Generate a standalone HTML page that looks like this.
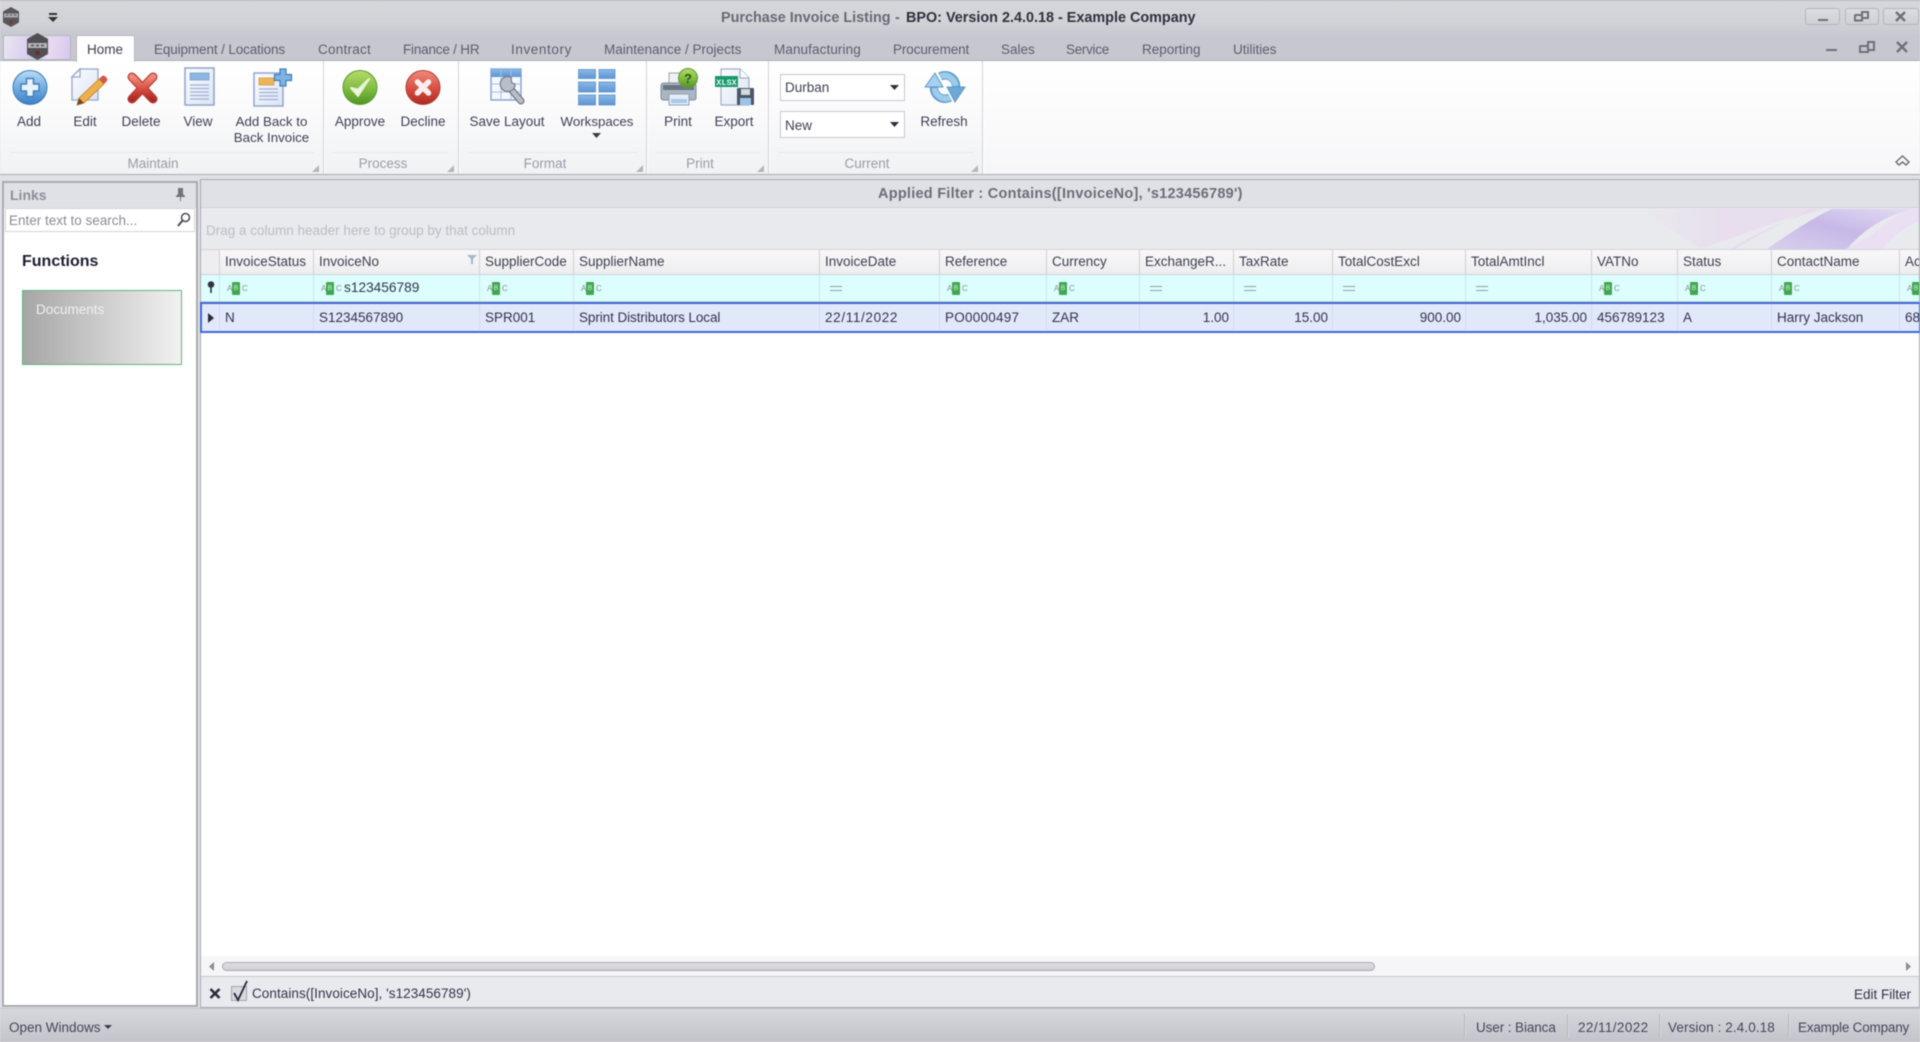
<!DOCTYPE html>
<html><head><meta charset="utf-8"><title>Purchase Invoice Listing</title>
<style>
html,body{margin:0;padding:0;background:#e0e1e6;}
#r{position:relative;width:1920px;height:1042px;overflow:hidden;background:#e0e1e6;font-family:"Liberation Sans",sans-serif;font-size:13.5px;color:#3e3f50;filter:blur(.45px);}
.a{position:absolute;}
.t{position:absolute;white-space:nowrap;line-height:16px;}
.c{transform:translateX(-50%);}
.tab{position:absolute;top:42px;line-height:16px;white-space:nowrap;color:#5d5e6e;}
.sep{position:absolute;top:61px;height:113px;width:1px;background:#d2d3d9;box-shadow:1px 0 0 #fff;}
.gl{position:absolute;top:156px;white-space:nowrap;line-height:16px;color:#9a9ba8;transform:translateX(-50%);}
.gline{position:absolute;top:152px;height:1px;background:#e6e7ea;}
.tri{position:absolute;top:165px;width:0;height:0;border-left:7px solid transparent;border-bottom:7px solid #b4b5bc;}
.h{position:absolute;top:250px;height:24px;background:linear-gradient(#f8f8f9,#eeeef0);border-right:1px solid #d0d1d6;line-height:23px;padding-left:5px;box-sizing:border-box;white-space:nowrap;overflow:hidden;color:#3e3f50;}
.f{position:absolute;top:275px;height:26px;border-right:1px solid #d4e4e6;box-sizing:border-box;}
.d{position:absolute;top:304px;height:26px;border-right:1px solid #d3daee;line-height:27px;padding:0 4px 0 5px;box-sizing:border-box;white-space:nowrap;overflow:hidden;color:#33344a;}
.n{text-align:right;}
.abc{position:absolute;left:7px;top:7px;width:24px;height:13px;}
.abc i{position:absolute;font-style:normal;font-size:8px;line-height:13px;color:#8b8b8b;}
.abc b{position:absolute;left:5px;top:0;width:8px;height:13px;background:#3fa84e;border-radius:1px;color:#cfeeda;font-size:7px;line-height:13px;text-align:center;font-weight:normal;}
.eq{position:absolute;left:10px;top:11px;width:12px;height:3px;border-top:1px solid #9a9a9a;border-bottom:1px solid #9a9a9a;}
svg{position:absolute;overflow:visible;}
.ss{position:absolute;top:1014px;height:24px;width:1px;background:#b5b6bd;box-shadow:1px 0 0 #d8d9dd;}
</style></head><body><div id="r">

<!-- title bar / tab row -->
<div class="a" style="left:0;top:0;width:1920px;height:61px;background:linear-gradient(#d6d7db 0,#d2d3d8 20px,#c6c7d0 36px,#c6c7cf 61px);border-top:1px solid #b4b5bb;box-sizing:border-box;"></div>

<svg style="left:2px;top:7px" width="18" height="20" viewBox="0 0 18 20"><path d="M9 0l8 4.500v11L9 20l-8-4.500v-11z" fill="#58585c"/><rect x="2" y="6.500" width="14" height="4" fill="#a9a9ae"/><path d="M4 8h2M8 8h2M12 8h2" stroke="#55555a" stroke-width="1"/><circle cx="9" cy="15" r="2" fill="#7a3a3a"/></svg>
<svg style="left:48px;top:13px" width="11" height="10" viewBox="0 0 11 10"><rect x="1" y="0" width="8" height="2" fill="#333"/><path d="M0 4h10L5 9z" fill="#333"/></svg>

<div class="t" style="left:721px;top:10px;font-weight:bold;font-size:14.4px;color:#686977">Purchase Invoice Listing</div>
<div class="t" style="left:895px;top:10px;font-weight:bold;font-size:14.4px;color:#686977">-</div>
<div class="t" style="left:906px;top:10px;font-weight:bold;font-size:14.4px;color:#2f3040">BPO: Version 2.4.0.18 - Example Company</div>

<div class="a" style="left:1805px;top:8px;width:35px;height:17px;border:1px solid #b4b5bc;border-radius:3px;box-sizing:border-box;background:linear-gradient(#dcdde1,#cfd0d5)"></div>
<div class="a" style="left:1845px;top:8px;width:34px;height:17px;border:1px solid #b4b5bc;border-radius:3px;box-sizing:border-box;background:linear-gradient(#dcdde1,#cfd0d5)"></div>
<div class="a" style="left:1883px;top:8px;width:36px;height:17px;border:1px solid #b4b5bc;border-radius:3px;box-sizing:border-box;background:linear-gradient(#dcdde1,#cfd0d5)"></div>
<svg style="left:0;top:0" width="1920" height="61" viewBox="0 0 1920 61" fill="none" stroke="#6f707c" stroke-width="2">
<path d="M1818 20h10"/>
<path d="M1855 15h7v-3h6v6h-6M1855 14.500v6h7v-6"/>
<path d="M1896 12l9 9M1905 12l-9 9" stroke-width="2.400"/>
<path d="M1826 50h11"/>
<path d="M1860 46h8v-4h6v8h-6M1860 45.500v6.500h8v-6.500"/>
<path d="M1897 42l10 10M1907 42l-10 10" stroke-width="2.400"/>
</svg>

<!-- app button -->
<div class="a" style="left:3px;top:35px;width:68px;height:25px;background:linear-gradient(100deg,#e9e6f3,#d8c9ef 45%,#e8d9f2 70%,#d5c8ee);border:1px solid #b7b7bf;box-sizing:border-box;border-radius:2px"></div>
<svg style="left:26px;top:33px" width="23" height="27" viewBox="0 0 23 27"><path d="M11.500 0L22 6v15l-10.500 6L1 21V6z" fill="#505054"/><rect x="2" y="10" width="19" height="5" fill="#b5b5ba"/><path d="M5 12.500h3M10 12.500h3M15 12.500h3" stroke="#505054" stroke-width="1.400"/><circle cx="11.500" cy="20" r="2.500" fill="#6a2f2f"/></svg>

<!-- Home tab + tabs -->
<div class="a" style="left:76px;top:35px;width:59px;height:27px;background:#fff;border:1px solid #b7b8be;border-bottom:none;box-sizing:border-box;border-radius:2px 2px 0 0;z-index:3"></div>
<div class="tab" style="left:87px;color:#3d3e4e;z-index:4">Home</div>
<div class="tab" style="left:154px;letter-spacing:-.12px">Equipment / Locations</div>
<div class="tab" style="left:318px;letter-spacing:.25px">Contract</div>
<div class="tab" style="left:403px;letter-spacing:-.2px">Finance / HR</div>
<div class="tab" style="left:511px;letter-spacing:.6px">Inventory</div>
<div class="tab" style="left:604px">Maintenance / Projects</div>
<div class="tab" style="left:774px;letter-spacing:.1px">Manufacturing</div>
<div class="tab" style="left:893px;letter-spacing:-.1px">Procurement</div>
<div class="tab" style="left:1001px">Sales</div>
<div class="tab" style="left:1066px;letter-spacing:-.3px">Service</div>
<div class="tab" style="left:1142px">Reporting</div>
<div class="tab" style="left:1233px">Utilities</div>

<!-- ribbon body -->
<div class="a" style="left:0;top:60px;width:1920px;height:115px;background:linear-gradient(#fff 0,#fbfbfc 40%,#f1f2f4 100%);border-top:1px solid #aeafb6;border-bottom:1px solid #a9aab1;box-sizing:border-box;z-index:1"></div>
<div class="a" style="left:982px;top:61px;width:938px;height:113px;background:linear-gradient(#fff,#f7f7f9);z-index:1"></div>
<div id="rb" class="a" style="left:0;top:0;width:1920px;height:180px;z-index:2;pointer-events:none">
<div class="sep" style="left:323px"></div><div class="sep" style="left:458px"></div><div class="sep" style="left:646px"></div><div class="sep" style="left:768px"></div><div class="sep" style="left:982px"></div>
<div class="gline" style="left:10px;width:304px"></div><div class="gline" style="left:333px;width:115px"></div><div class="gline" style="left:468px;width:170px"></div><div class="gline" style="left:656px;width:104px"></div><div class="gline" style="left:778px;width:196px"></div>
<div class="gl" style="left:153px">Maintain</div><div class="gl" style="left:383px">Process</div><div class="gl" style="left:545px">Format</div><div class="gl" style="left:700px">Print</div><div class="gl" style="left:867px">Current</div>
<div class="tri" style="left:312px"></div><div class="tri" style="left:447px"></div><div class="tri" style="left:636px"></div><div class="tri" style="left:757px"></div><div class="tri" style="left:971px"></div>

<!-- Add -->
<svg style="left:12px;top:69px" width="36" height="37" viewBox="0 0 36 37"><defs>
<linearGradient id="gb" x1="0" y1="0" x2="0" y2="1"><stop offset="0" stop-color="#b9dcf7"/><stop offset=".55" stop-color="#6fa9de"/><stop offset="1" stop-color="#3b7fc4"/></linearGradient>
<linearGradient id="gg" x1="0" y1="0" x2="0" y2="1"><stop offset="0" stop-color="#b5dc6a"/><stop offset=".6" stop-color="#7ab83d"/><stop offset="1" stop-color="#4f9426"/></linearGradient>
<linearGradient id="gr" x1="0" y1="0" x2="0" y2="1"><stop offset="0" stop-color="#f08a7d"/><stop offset=".6" stop-color="#d4483c"/><stop offset="1" stop-color="#ab2b22"/></linearGradient>
<linearGradient id="gd" x1="0" y1="0" x2="1" y2="1"><stop offset="0" stop-color="#fbfcff"/><stop offset="1" stop-color="#dbe4f5"/></linearGradient>
<linearGradient id="gt" x1="0" y1="0" x2="0" y2="1"><stop offset="0" stop-color="#8ab9e8"/><stop offset="1" stop-color="#5b95d2"/></linearGradient>
</defs>
<circle cx="18" cy="18.500" r="17" fill="url(#gb)" stroke="#3c79b6"/><path d="M14.500 9.500h7v5.500h5.500v7h-5.500v5.500h-7V22H9v-7h5.500z" fill="#eaf3fb" stroke="#3f7fbe" stroke-width="1.500" stroke-linejoin="round"/></svg>
<div class="t c" style="left:29px;top:114px;color:#3e3f55">Add</div>

<!-- Edit -->
<svg style="left:71px;top:68px" width="36" height="38" viewBox="0 0 36 38"><path d="M9 1h18v31H1V9z" fill="url(#gd)" stroke="#97a7c8" stroke-width="1.300"/><path d="M9 1v8H1z" fill="#fff" stroke="#97a7c8" stroke-width="1.300"/><path d="M8 30l20-19 5 5-20 19-7 2z" fill="#eeb04a" stroke="#c47f23" stroke-width=".8"/><path d="M28 11l3-3q2-1 4 1t1 4l-3 3z" fill="#d4574c"/><path d="M6 37l2-7 5 5z" fill="#6e4b2b"/></svg>
<div class="t c" style="left:85px;top:114px;color:#3e3f55">Edit</div>

<!-- Delete -->
<svg style="left:127px;top:72px" width="31" height="32" viewBox="0 0 31 32"><path d="M5 5L26 27M26 5L5 27" stroke="#b73e33" stroke-width="9" stroke-linecap="round"/><path d="M5 5L26 27M26 5L5 27" stroke="url(#gr)" stroke-width="6.500" stroke-linecap="round"/></svg>
<div class="t c" style="left:141px;top:114px;color:#3e3f55">Delete</div>

<!-- View -->
<svg style="left:184px;top:67px" width="31" height="39" viewBox="0 0 31 39"><rect x="1" y="1" width="29" height="37" fill="url(#gd)" stroke="#90a3cc" stroke-width="1.500"/><rect x="6" y="6" width="19" height="7" fill="#8db6e0" stroke="#6f9bcc" stroke-width=".7"/><path d="M6 18h19M6 21.500h19M6 25h19M6 28.500h19M6 32h19" stroke="#9fb1d2" stroke-width="1.200"/></svg>
<div class="t c" style="left:198px;top:114px;color:#3e3f55">View</div>

<!-- Add back -->
<svg style="left:253px;top:68px" width="40" height="39" viewBox="0 0 40 39"><rect x="1" y="5" width="29" height="33" fill="url(#gd)" stroke="#94a6ca" stroke-width="1.500"/><rect x="6" y="10" width="15" height="7" fill="#eeb558" stroke="#cf9234" stroke-width=".7"/><path d="M6 21h19M6 24.500h19M6 28h19M6 31.500h19" stroke="#9fb1d2" stroke-width="1.200"/><path d="M27 1h6v5.500h5.500v6H33V18h-6v-5.500h-5.500v-6H27z" fill="#7fb2e2" stroke="#3e7fbd" stroke-width="1.200"/></svg>
<div class="t c" style="left:271.500px;top:114px;color:#3e3f55;font-size:13.3px">Add Back to</div>
<div class="t c" style="left:271.500px;top:130px;color:#3e3f55;font-size:13.3px">Back Invoice</div>

<!-- Approve -->
<svg style="left:342px;top:69px" width="36" height="37" viewBox="0 0 36 37"><circle cx="18" cy="18.500" r="17" fill="url(#gg)" stroke="#5a9b30"/><path d="M9 19l7 8L27 10l-11 10.500z" fill="#f1f7e4" stroke="#e9f3d8" stroke-width="2" stroke-linejoin="round"/></svg>
<div class="t c" style="left:360px;top:114px;color:#3e3f55">Approve</div>

<!-- Decline -->
<svg style="left:405px;top:69px" width="36" height="37" viewBox="0 0 36 37"><circle cx="18" cy="18.500" r="17" fill="url(#gr)" stroke="#b23a30"/><path d="M12.500 13L23.500 24M23.500 13L12.500 24" stroke="#fbeeed" stroke-width="5.500" stroke-linecap="round"/></svg>
<div class="t c" style="left:423px;top:114px;color:#3e3f55">Decline</div>

<!-- Save layout -->
<svg style="left:490px;top:68px" width="36" height="38" viewBox="0 0 36 38"><rect x="1" y="1" width="30" height="31" fill="#f4f7fc" stroke="#7a9ccb" stroke-width="1.300"/><rect x="1" y="1" width="30" height="8" fill="url(#gt)"/><path d="M11 1v31M21 1v31M1 16h30M1 24h30" stroke="#a8bedd" stroke-width="1"/><path d="M19 19L31 33" stroke="#6e7783" stroke-width="7" stroke-linecap="round"/><path d="M19 19L31 33" stroke="#b8bfc9" stroke-width="4.500" stroke-linecap="round"/><path d="M21.500 9.500a7.500 7.500 0 1 0 3.500 8.500L25 16l-3-1-.8-2.800z" fill="#b8bfc9" stroke="#6e7783" stroke-width="1.100" stroke-linejoin="round"/></svg>
<div class="t c" style="left:507px;top:114px;color:#3e3f55">Save Layout</div>

<!-- Workspaces -->
<svg style="left:578px;top:69px" width="38" height="37" viewBox="0 0 38 37"><g fill="url(#gt)" stroke="#5d92c9" stroke-width=".8"><rect x=".5" y=".5" width="17" height="9"/><rect x="21" y=".5" width="16" height="9"/><rect x=".5" y="13" width="17" height="10"/><rect x="21" y="13" width="16" height="10"/><rect x=".5" y="26" width="17" height="10"/><rect x="21" y="26" width="16" height="10"/></g></svg>
<div class="t c" style="left:597px;top:114px;color:#3e3f55;font-size:13.3px">Workspaces</div>
<svg style="left:592px;top:133px" width="9" height="5" viewBox="0 0 9 5"><path d="M0 0h9L4.500 5z" fill="#3a3a44"/></svg>

<!-- Print -->
<svg style="left:659px;top:68px" width="40" height="38" viewBox="0 0 40 38"><rect x="10" y="5" width="20" height="14" fill="#eef1f6" stroke="#9ba5b3"/><path d="M5 15h29q3 0 3 3v12q0 2-3 2H5q-3 0-3-2V18q0-3 3-3z" fill="#aab6c4" stroke="#7f8b9a"/><rect x="4" y="17" width="31" height="5" fill="#6a7583"/><rect x="10" y="26" width="20" height="11" fill="#e3ecf7" stroke="#92a0b2"/><rect x="12" y="31" width="16" height="4" fill="#a9c8ea"/><circle cx="29" cy="10" r="9.500" fill="url(#gg)" stroke="#5f9b35"/><text x="29" y="15" text-anchor="middle" font-family="Liberation Sans" font-weight="bold" font-size="13" fill="#33501a">?</text></svg>
<div class="t c" style="left:678px;top:114px;color:#3e3f55">Print</div>

<!-- Export -->
<svg style="left:715px;top:68px" width="40" height="39" viewBox="0 0 40 39"><path d="M6 1h19l9 9v27H6z" fill="url(#gd)" stroke="#a1aec8" stroke-width="1.200"/><path d="M25 1v9h9" fill="#fff" stroke="#a1aec8" stroke-width="1.200"/><rect x="0" y="8" width="23" height="11" fill="#159a6b"/><text x="11.500" y="16.800" text-anchor="middle" font-family="Liberation Mono" font-weight="bold" font-size="8.500" fill="#e8f8f0">XLSX</text><rect x="22" y="20" width="17" height="17" rx="1" fill="#4c5664"/><rect x="26" y="21" width="9" height="6" fill="#d5dae2"/><rect x="25" y="30" width="11" height="7" fill="#9cc4ea"/></svg>
<div class="t c" style="left:734px;top:114px;color:#3e3f55">Export</div>

<!-- Combos -->
<div class="a" style="left:780px;top:74px;width:125px;height:27px;background:#fff;border:1px solid #c7c8ce;box-sizing:border-box"></div>
<div class="t" style="left:785px;top:80px;color:#3e3f55">Durban</div>
<svg style="left:890px;top:85px" width="9" height="5" viewBox="0 0 9 5"><path d="M0 0h9L4.500 5z" fill="#2f2f38"/></svg>
<div class="a" style="left:780px;top:111px;width:125px;height:27px;background:#fff;border:1px solid #c7c8ce;box-sizing:border-box"></div>
<div class="t" style="left:785px;top:118px;color:#3e3f55">New</div>
<svg style="left:890px;top:122px" width="9" height="5" viewBox="0 0 9 5"><path d="M0 0h9L4.500 5z" fill="#2f2f38"/></svg>

<!-- Refresh -->
<svg style="left:924px;top:71px" width="42" height="34" viewBox="0 0 42 34" fill="none"><g stroke="#5f9ac9" stroke-width="8.500"><path d="M16 5.500A11 11 0 0 1 32 16"/><path d="M26 26.500A11 11 0 0 1 10 16"/></g><path d="M1 16L11 2l8 14z" fill="#a5d0ef" stroke="#5f9ac9"/><path d="M23 16h18L31 31z" fill="#6ea8d8" stroke="#5f9ac9"/><g stroke="#9ccbec" stroke-width="6"><path d="M16 5.500A11 11 0 0 1 31.500 15"/><path d="M26 26.500A11 11 0 0 1 10.500 17"/></g></svg>
<div class="t c" style="left:944px;top:114px;color:#3e3f55">Refresh</div>

<!-- collapse -->
<svg style="left:1895px;top:155px" width="15" height="12" viewBox="0 0 15 12" fill="none" stroke="#70717c" stroke-width="1.500"><path d="M1 7L7.500 1 14 7l-3 3-3.500-3-3.500 3z"/></svg>
</div>

<!-- sidebar -->
<div class="a" style="left:2px;top:181px;width:196px;height:826px;border:1px solid #a9aab0;border-width:2px;box-sizing:border-box;background:#fff"></div>
<div class="a" style="left:4px;top:183px;width:192px;height:25px;background:#e0e1e6"></div>
<div class="t" style="left:10px;top:187px;font-weight:bold;font-size:14px;color:#8d8e9b">Links</div>
<svg style="left:176px;top:188px" width="9" height="13" viewBox="0 0 9 13"><path d="M2 0h5v6l2 2v1H5v4H4V9H0V8l2-2z" fill="#72737f"/></svg>
<div class="a" style="left:5px;top:208px;width:190px;height:24px;background:#fff;border:1px solid #d4d5da;box-sizing:border-box"></div>
<div class="t" style="left:9px;top:213px;color:#8a8b95">Enter text to search...</div>
<svg style="left:177px;top:212px" width="14" height="15" viewBox="0 0 14 15" fill="none" stroke="#4a4b55" stroke-width="1.500"><circle cx="8.500" cy="5.500" r="4"/><path d="M5.500 8.500L1 14" stroke-width="2"/></svg>
<div class="t" style="left:22px;top:254px;font-weight:bold;font-size:16px;color:#1d1e33">Functions</div>
<div class="a" style="left:22px;top:290px;width:160px;height:75px;background:linear-gradient(90deg,#a6a6a6,#f2f2f2);border:1px solid #5db57e;box-sizing:border-box"></div>
<div class="t" style="left:36px;top:302px;color:#f0f0f0">Documents</div>

<!-- main grid container -->
<div class="a" style="left:200px;top:179px;width:1720px;height:829px;background:#fff;border:1px solid #a7a8ae;border-width:1px 1px 1px 1px;box-sizing:border-box"></div>
<div class="a" style="left:201px;top:180px;width:1718px;height:28px;background:#e0e1e6;border-bottom:1px solid #d0d1d6;box-sizing:border-box"></div>
<div class="t" style="left:878px;top:186px;font-weight:bold;font-size:14.5px;letter-spacing:.25px;color:#6c6d7a">Applied Filter : Contains([InvoiceNo], 's123456789')</div>
<div class="a" style="left:201px;top:208px;width:1718px;height:42px;background:#e9eaee;border-bottom:1px solid #d2d3d8;box-sizing:border-box"></div>
<svg style="left:1640px;top:209px" width="279" height="40" viewBox="0 0 279 40"><defs>
<linearGradient id="w1" x1="0" y1="0" x2="1" y2="0"><stop offset="0" stop-color="#e9eaee"/><stop offset=".5" stop-color="#e8d6ec"/><stop offset="1" stop-color="#e9d8ee"/></linearGradient>
<linearGradient id="w2" x1="0" y1="1" x2="1" y2="0"><stop offset="0" stop-color="#d9d0ee"/><stop offset=".5" stop-color="#c7b8e8"/><stop offset="1" stop-color="#e4dcf3"/></linearGradient></defs>
<path d="M60 40L175 0H0z" fill="url(#w1)" opacity=".6"/><path d="M90 40Q140 10 185 0h-15Q120 25 95 40z" fill="#e8d2ec" opacity=".6"/><path d="M127 40Q170 10 192 0h80q-40 10-65 40z" fill="url(#w2)"/><path d="M205 40q20-8 40-25t34-15v12q-20 8-37 28z" fill="#eadff3"/></svg>
<div class="t" style="left:206px;top:223px;color:#bcbdc5">Drag a column header here to group by that column</div>

<!-- header -->
<div class="h" style="left:201px;width:19px;background:#eeeef0"></div>
<div class="h" style="left:220px;width:94px">InvoiceStatus</div>
<div class="h" style="left:314px;width:166px">InvoiceNo</div>
<div class="h" style="left:480px;width:94px">SupplierCode</div>
<div class="h" style="left:574px;width:246px">SupplierName</div>
<div class="h" style="left:820px;width:120px">InvoiceDate</div>
<div class="h" style="left:940px;width:107px">Reference</div>
<div class="h" style="left:1047px;width:93px">Currency</div>
<div class="h" style="left:1140px;width:94px">ExchangeR...</div>
<div class="h" style="left:1234px;width:99px">TaxRate</div>
<div class="h" style="left:1333px;width:133px">TotalCostExcl</div>
<div class="h" style="left:1466px;width:126px">TotalAmtIncl</div>
<div class="h" style="left:1592px;width:86px">VATNo</div>
<div class="h" style="left:1678px;width:94px">Status</div>
<div class="h" style="left:1772px;width:128px">ContactName</div>
<div class="h" style="left:1900px;width:19px;border-right:none">Ac</div>
<svg style="left:467px;top:255px" width="10" height="9" viewBox="0 0 10 9"><path d="M0 0h10L6 4v5H4V4z" fill="#a7b6c6"/></svg>
<div class="a" style="left:201px;top:274px;width:1718px;height:1px;background:#d0d1d6"></div>

<!-- filter row -->
<div class="a" style="left:201px;top:275px;width:1718px;height:27px;background:#dcfefe;border-bottom:1px solid #cfd6da;box-sizing:border-box"></div>
<div class="f" style="left:201px;width:19px"></div>
<svg style="left:207px;top:281px" width="8" height="12" viewBox="0 0 8 12"><circle cx="4" cy="3.500" r="3.300" fill="#33343f"/><rect x="3.200" y="5" width="1.600" height="7" fill="#33343f"/></svg>
<div class="f" style="left:220px;width:94px"><div class="abc"><i style="left:0">A</i><b>B</b><i style="left:15px">C</i></div></div>
<div class="f" style="left:314px;width:166px"><div class="abc"><i style="left:0">A</i><b>B</b><i style="left:15px">C</i></div><div class="t" style="left:30px;top:5px;color:#33344a;font-size:13.700px">s123456789</div></div>
<div class="f" style="left:480px;width:94px"><div class="abc"><i style="left:0">A</i><b>B</b><i style="left:15px">C</i></div></div>
<div class="f" style="left:574px;width:246px"><div class="abc"><i style="left:0">A</i><b>B</b><i style="left:15px">C</i></div></div>
<div class="f" style="left:820px;width:120px"><div class="eq"></div></div>
<div class="f" style="left:940px;width:107px"><div class="abc"><i style="left:0">A</i><b>B</b><i style="left:15px">C</i></div></div>
<div class="f" style="left:1047px;width:93px"><div class="abc"><i style="left:0">A</i><b>B</b><i style="left:15px">C</i></div></div>
<div class="f" style="left:1140px;width:94px"><div class="eq"></div></div>
<div class="f" style="left:1234px;width:99px"><div class="eq"></div></div>
<div class="f" style="left:1333px;width:133px"><div class="eq"></div></div>
<div class="f" style="left:1466px;width:126px"><div class="eq"></div></div>
<div class="f" style="left:1592px;width:86px"><div class="abc"><i style="left:0">A</i><b>B</b><i style="left:15px">C</i></div></div>
<div class="f" style="left:1678px;width:94px"><div class="abc"><i style="left:0">A</i><b>B</b><i style="left:15px">C</i></div></div>
<div class="f" style="left:1772px;width:128px"><div class="abc"><i style="left:0">A</i><b>B</b><i style="left:15px">C</i></div></div>
<div class="f" style="left:1900px;width:19px;border-right:none;overflow:hidden"><div class="abc"><i style="left:0">A</i><b>B</b></div></div>

<!-- selected row -->
<div class="a" style="left:200px;top:302px;width:1720px;height:31px;background:#e1e8fa;border:2px solid #3d68d6;border-width:2px 1px 2px 2px;box-sizing:border-box"></div>
<div class="d" style="left:202px;width:18px"></div>
<svg style="left:208px;top:313px" width="6" height="10" viewBox="0 0 6 10"><path d="M0 0l6 5-6 5z" fill="#2a2b36"/></svg>
<div class="d" style="left:220px;width:94px">N</div>
<div class="d" style="left:314px;width:166px">S1234567890</div>
<div class="d" style="left:480px;width:94px">SPR001</div>
<div class="d" style="left:574px;width:246px;letter-spacing:-.08px">Sprint Distributors Local</div>
<div class="d" style="left:820px;width:120px;letter-spacing:.65px">22/11/2022</div>
<div class="d" style="left:940px;width:107px;letter-spacing:.25px">PO0000497</div>
<div class="d" style="left:1047px;width:93px">ZAR</div>
<div class="d n" style="left:1140px;width:94px">1.00</div>
<div class="d n" style="left:1234px;width:99px">15.00</div>
<div class="d n" style="left:1333px;width:133px">900.00</div>
<div class="d n" style="left:1466px;width:126px">1,035.00</div>
<div class="d" style="left:1592px;width:86px">456789123</div>
<div class="d" style="left:1678px;width:94px">A</div>
<div class="d" style="left:1772px;width:128px">Harry Jackson</div>
<div class="d" style="left:1900px;width:19px;border-right:none">68</div>

<!-- scrollbar -->
<div class="a" style="left:201px;top:956px;width:1718px;height:21px;background:#f6f6f8;border-bottom:1px solid #c6c7cc;box-sizing:border-box"></div>
<svg style="left:209px;top:962px" width="5" height="9" viewBox="0 0 5 9"><path d="M5 0L0 4.500 5 9z" fill="#8c8d96"/></svg>
<svg style="left:1906px;top:962px" width="5" height="9" viewBox="0 0 5 9"><path d="M0 0l5 4.500L0 9z" fill="#8c8d96"/></svg>
<div class="a" style="left:222px;top:962px;width:1153px;height:9px;background:linear-gradient(#dddee2,#cfd0d5);border:1px solid #a9aab1;border-radius:5px;box-sizing:border-box"></div>

<!-- filter panel -->
<div class="a" style="left:201px;top:977px;width:1718px;height:30px;background:#e9eaee"></div>
<svg style="left:209px;top:988px" width="12" height="11" viewBox="0 0 12 11"><path d="M1.500 1l9 9M10.500 1l-9 9" stroke="#2b2c3a" stroke-width="2.600"/></svg>
<div class="a" style="left:231px;top:986px;width:16px;height:15px;background:#d9dae0;border:1px solid #a4a5ac;box-sizing:border-box"></div>
<svg style="left:232px;top:980px" width="17" height="21" viewBox="0 0 17 21"><path d="M2 13l4 7L15 1" fill="none" stroke="#26273a" stroke-width="1.800"/></svg>
<div class="t" style="left:252px;top:986px;color:#33344a;letter-spacing:.06px">Contains([InvoiceNo], 's123456789')</div>
<div class="t" style="left:1854px;top:987px;color:#33344a">Edit Filter</div>

<!-- status bar -->
<div class="a" style="left:0;top:1008px;width:1920px;height:34px;background:linear-gradient(#d7d8dc,#c3c4cb);border-top:1px solid #c2c3c9;box-sizing:border-box"></div>
<div class="t" style="left:9px;top:1020px;color:#44455a">Open Windows</div>
<svg style="left:104px;top:1025px" width="8" height="4" viewBox="0 0 8 4"><path d="M0 0h8L4 4z" fill="#3a3b48"/></svg>
<div class="ss" style="left:1464px"></div><div class="ss" style="left:1567px"></div><div class="ss" style="left:1659px"></div><div class="ss" style="left:1788px"></div>
<div class="t" style="left:1476px;top:1020px;color:#44455a;letter-spacing:-.1px">User : Bianca</div>
<div class="t" style="left:1578px;top:1020px;color:#44455a;letter-spacing:.4px">22/11/2022</div>
<div class="t" style="left:1668px;top:1020px;color:#44455a;letter-spacing:.1px">Version : 2.4.0.18</div>
<div class="t" style="left:1798px;top:1020px;color:#44455a;letter-spacing:-.2px">Example Company</div>
</div></body></html>
